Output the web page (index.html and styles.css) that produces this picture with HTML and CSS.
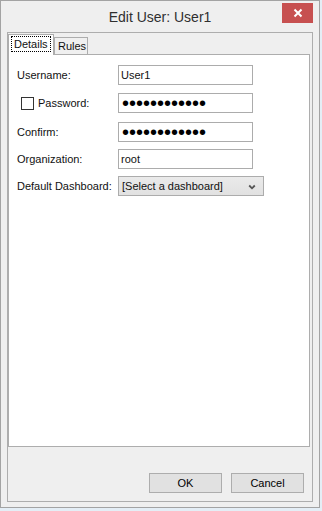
FILE: index.html
```html
<!DOCTYPE html>
<html lang="en">
<head>
  <meta charset="UTF-8">
  <meta name="viewport" content="width=device-width, initial-scale=1.0">
  <title>Edit User: User1</title>
  <link rel="stylesheet" href="styles.css">
</head>
<body>
  <div class="window">
    <div class="titlebar">
      <span class="title">Edit User: User1</span>
      <button class="close" aria-label="Close">
        <svg width="10" height="10" viewBox="0 0 10 10">
          <path d="M1.5 1.5 L8.5 8.5 M8.5 1.5 L1.5 8.5" stroke="#fff" stroke-width="2" fill="none"/>
        </svg>
      </button>
    </div>

    <div class="client">
      <div class="tabs">
        <div class="tab active"><span class="focus">Details</span></div>
        <div class="tab rules">Rules</div>
      </div>

      <div class="panel">
        <div class="form">
          <div class="row r1">
            <label class="lbl" for="username">Username:</label>
            <input id="username" class="field" type="text" value="User1">
          </div>
          <div class="row r2">
            <label class="lbl check-lbl"><span class="checkbox"></span>Password:</label>
            <input class="field secret" type="password" value="password1234">
          </div>
          <div class="row r3">
            <label class="lbl" for="confirm">Confirm:</label>
            <input id="confirm" class="field secret" type="password" value="password1234">
          </div>
          <div class="row r4">
            <label class="lbl" for="org">Organization:</label>
            <input id="org" class="field" type="text" value="root">
          </div>
          <div class="row r5">
            <label class="lbl" for="dash">Default Dashboard:</label>
            <div class="select-wrap">
              <select id="dash" class="dropdown">
                <option>[Select a dashboard]</option>
              </select>
              <svg class="chevron" width="8" height="6" viewBox="0 0 8 6">
                <path d="M1.2 1.5 L4 4.3 L6.8 1.5" stroke="#555" stroke-width="1.8" fill="none"/>
              </svg>
            </div>
          </div>
        </div>
      </div>

      <div class="buttons">
        <button class="btn">OK</button>
        <button class="btn">Cancel</button>
      </div>
    </div>
  </div>
</body>
</html>
```

FILE: styles.css
```css
body {
  margin: 0;
  background-color: #e4eef6;
  font-family: "Liberation Sans", Arial, sans-serif;
  font-size: 11px;
  color: #111;
}

.window {
  box-sizing: border-box;
  width: 320px;
  height: 508px;
  border: 1px solid #a3a3a3;
  background-color: #efefef;
}

.titlebar {
  position: relative;
  height: 31px;
  text-align: center;
}

.title {
  display: inline-block;
  padding-top: 8px;
  font-size: 14px;
  color: #2f2f2f;
}

.close {
  position: absolute;
  top: 2px;
  right: 6px;
  width: 31px;
  height: 20px;
  padding: 0;
  border: none;
  background-color: #c75050;
  display: flex;
  align-items: center;
  justify-content: center;
}

.client {
  box-sizing: border-box;
  height: 470px;
  margin: 0 6px;
  border: 1px solid #adadad;
  display: flex;
  flex-direction: column;
}

.tabs {
  display: flex;
  align-items: flex-end;
  height: 20px;
  margin-top: 1px;
}

.tab {
  box-sizing: border-box;
  height: 17px;
  padding: 0 3px;
  border: 1px solid #adadad;
  border-bottom: none;
  background-color: #f0f0f0;
  line-height: 16px;
}

.tab.rules {
  width: 34px;
  text-align: center;
}

.tab.active {
  position: relative;
  z-index: 1;
  width: 46px;
  height: 21px;
  margin-bottom: -1px;
  padding: 1px 2px 0;
  background-color: #fff;
}

.focus {
  display: block;
  height: 14px;
  border: 1px dotted #000;
  padding: 0 2px;
  line-height: 14px;
}

.panel {
  box-sizing: border-box;
  height: 393px;
  margin-right: 2px;
  border: 1px solid #adadad;
  background-color: #fff;
}

.form {
  padding: 10px 0 0 8px;
}

.row {
  display: flex;
  align-items: center;
  height: 20px;
}

.r2 { margin-top: 8px; }
.r3 { margin-top: 9px; }
.r4 { margin-top: 7px; }
.r5 { margin-top: 7px; }

.lbl {
  width: 101px;
  flex: none;
}

.check-lbl {
  display: flex;
  align-items: center;
}

.checkbox {
  box-sizing: border-box;
  width: 13px;
  height: 13px;
  margin: 0 4px 0 4px;
  border: 1px solid #333;
  background-color: #fff;
}

.field {
  box-sizing: border-box;
  width: 135px;
  height: 20px;
  margin: 0;
  padding: 0 2px;
  border: 1px solid #acacac;
  font-family: "Liberation Sans", Arial, sans-serif;
  font-size: 11px;
  color: #111;
  outline: none;
}

.secret {
  padding-left: 3px;
  font-size: 20px;
  color: #000;
}

.select-wrap {
  position: relative;
}

.dropdown {
  box-sizing: border-box;
  width: 146px;
  height: 20px;
  margin: 0;
  padding: 0 3px;
  border: 1px solid #acacac;
  background: linear-gradient(#eaeaea, #e1e1e1);
  font-family: "Liberation Sans", Arial, sans-serif;
  font-size: 11px;
  color: #111;
  appearance: none;
  -webkit-appearance: none;
  outline: none;
}

.chevron {
  position: absolute;
  top: 8px;
  right: 8px;
}

.buttons {
  display: flex;
  justify-content: flex-end;
  gap: 9px;
  margin: 26px 8px 0 0;
}

.btn {
  box-sizing: border-box;
  width: 73px;
  height: 20px;
  padding: 0;
  border: 1px solid #adadad;
  background-color: #e1e1e1;
  font-family: "Liberation Sans", Arial, sans-serif;
  font-size: 11px;
  color: #000;
}
```
